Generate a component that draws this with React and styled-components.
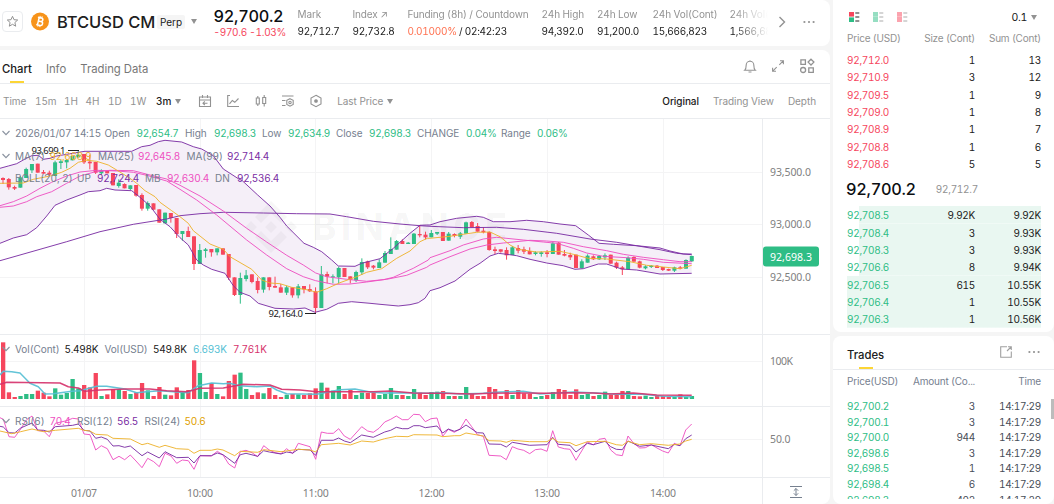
import React from 'react'
import styled, { createGlobalStyle } from 'styled-components'

const GlobalStyle = createGlobalStyle`
  * {
    box-sizing: border-box;
  }
  body {
    margin: 0;
    background: #f5f5f5;
    color: #202020;
    font-family: Inter, 'Noto Sans', sans-serif;
    font-size: 10px;
    font-variant-numeric: tabular-nums;
    letter-spacing: -0.28px;
    overflow: hidden;
  }
  svg {
    display: block;
    flex: none;
  }
`

const green = '#2ebd85'
const red = '#f6465d'
const purple = '#7a2da3'
const pink = '#ee4fc1'
const yellow = '#eeb22b'
const gray = '#929292'

const Page = styled.div`
  display: grid;
  grid-template-columns: 830px 221px;
  column-gap: 3px;
  width: 1054px;
  height: 504px;
  overflow: hidden;
`

const Column = styled.div`
  display: flex;
  flex-direction: column;
  gap: 4px;
  min-width: 0;
  height: 504px;
`

const Header = styled.header`
  display: flex;
  align-items: center;
  height: 46px;
  padding: 0 0 3px 2px;
  background: #fff;
  border-radius: 0 8px 8px 0;
`

const StarButton = styled.div`
  display: flex;
  align-items: center;
  justify-content: center;
  width: 21px;
  height: 21px;
  margin-right: 8px;
  border: 1px solid #eaecef;
  border-radius: 4px;
`

const Title = styled.h1`
  width: 100px;
  margin: 0 0 0 8px;
  font-size: 16.5px;
  font-weight: 500;
  letter-spacing: -0.05px;
  white-space: nowrap;
`

const Badge = styled.span`
  width: 28px;
  height: 14px;
  margin-top: 1px;
  line-height: 14px;
  border-radius: 2px;
  background: #f5f5f5;
  letter-spacing: 0;
  text-align: center;
`

const Caret = styled.i`
  display: inline-block;
  flex: none;
  width: 0;
  height: 0;
  margin-left: ${p => p.$ml || 0}px;
  border: 3.5px solid transparent;
  border-top: 5px solid #929292;
  border-bottom: 0;
`

const LastPrice = styled.div`
  width: 84px;
  margin: 3px 0 0 17px;
  font-size: 10px;
  line-height: 13px;
  white-space: nowrap;
  color: ${red};
`

const BigPrice = styled.div`
  font-size: 16.3px;
  font-weight: 500;
  line-height: 19px;
  color: #0b0e11;
`

const Stats = styled.div`
  display: flex;
  width: 470px;
  padding-top: 3px;
  overflow: hidden;
  mask-image: linear-gradient(90deg, #000 435px, transparent 470px);
`

const Stat = styled.div`
  flex: none;
  width: ${p => p.$w}px;
  line-height: 17px;
  white-space: nowrap;
`

const StatLabel = styled.div`
  color: ${gray};
  letter-spacing: -0.13px;
`

const Funding = styled.span`
  color: #ff7150;
`

const ChartCard = styled.section`
  display: flex;
  flex-direction: column;
  height: 454px;
  background: #fff;
  border-radius: 0 8px 8px 0;
`

const TabBar = styled.div`
  display: flex;
  align-items: center;
  gap: 14px;
  height: 34px;
  padding: 4px 15px 0 2px;
  border-bottom: 1px solid #eaecef;
`

const Tab = styled.div`
  display: flex;
  flex-direction: column;
  align-items: center;
  height: 29px;
  padding-top: 6px;
  line-height: 18px;
  font-size: 11.3px;
  font-weight: ${p => (p.$active ? 500 : 400)};
  letter-spacing: 0;
  color: ${p => (p.$active ? '#202020' : '#777')};
  &:after {
    content: '';
    width: 14px;
    height: 2px;
    margin-top: 3px;
    background: ${p => (p.$active ? '#fcd535' : 'transparent')};
  }
`

const TabIcons = styled.div`
  display: flex;
  align-items: center;
  gap: 14px;
  margin: -5px 0 0 auto;
`

const Toolbar = styled.div`
  display: flex;
  align-items: center;
  height: 35px;
  padding: 0 14px 0 3px;
  border-bottom: 1px solid #eaecef;
  letter-spacing: -0.06px;
  color: ${gray};
`

const Interval = styled.span`
  width: ${p => p.$w}px;
  color: ${p => (p.$active ? '#202020' : gray)};
  font-weight: ${p => (p.$active ? 500 : 400)};
  white-space: nowrap;
`

const ToolIcons = styled.div`
  display: flex;
  align-items: center;
  gap: 13.8px;
  margin: 0 14px 0 17px;
`

const ViewLinks = styled.div`
  display: flex;
  gap: 14px;
  margin-left: auto;
`

const ChartBody = styled.div`
  position: relative;
  height: 385px;
`

const Legend = styled.div`
  position: absolute;
  left: 2px;
  top: ${p => p.$top}px;
  display: flex;
  align-items: center;
  height: 14px;
  white-space: nowrap;
`

const LegendItem = styled.span`
  width: ${p => p.$w}px;
  color: ${p => p.$color || '#76808f'};
`

const LegendName = styled(LegendItem)`
  letter-spacing: -0.06px;
`

const BookCard = styled.section`
  height: 332px;
  padding: 10px 13px 0 14px;
  background: #fff;
  border-radius: 0 0 8px 8px;
`

const BookTools = styled.div`
  display: flex;
  align-items: center;
  gap: 13px;
  height: 14px;
  padding-left: 2px;
`

const Precision = styled.div`
  display: flex;
  align-items: center;
  margin: 0 4px 0 auto;
  font-size: 10.5px;
`

const Row = styled.div`
  display: grid;
  grid-template-columns: 66px 62px 66px;
  height: ${p => p.$h || 17.33}px;
  line-height: ${p => (p.$h || 17.33) + (p.$shift || 0)}px;
  background: ${p => (p.$depth ? `linear-gradient(#e9f7f1, #e9f7f1) right / ${p.$depth}% 100% no-repeat` : 'none')};
  color: ${p => p.$color || '#202020'};
  letter-spacing: ${p => p.$ls || -0.28}px;
  white-space: nowrap;
  span {
    text-align: right;
  }
  span:first-child {
    text-align: left;
    color: ${p => p.$price};
  }
`

const MidPrice = styled.div`
  display: flex;
  align-items: center;
  gap: 20px;
  height: 34px;
  margin-left: -1px;
  color: ${gray};
`

const TradesCard = styled.section`
  display: flex;
  flex-direction: column;
  height: 168px;
  background: #fff;
  border-radius: 8px;
  overflow: hidden;
`

const TradesHead = styled.div`
  display: flex;
  align-items: center;
  gap: 15px;
  height: 34px;
  padding: 0 14px 2px;
  border-bottom: 1px solid #eaecef;
`

const TradesTab = styled(Tab)`
  height: 34px;
  padding-top: 11px;
  margin-right: auto;
`

const TradesList = styled.div`
  position: relative;
  height: 129px;
  padding: 3px 13px 0 14px;
  overflow: hidden;
`

const ScrollThumb = styled.i`
  position: absolute;
  right: 0;
  top: 29px;
  width: 3px;
  height: 20px;
  background: #bcbcbc;
`

const Spacer = styled.div`
  height: 10px;
`

const asks = [
  ['92,712.0', '1', '13'],
  ['92,710.9', '3', '12'],
  ['92,709.5', '1', '9'],
  ['92,709.0', '1', '8'],
  ['92,708.9', '1', '7'],
  ['92,708.8', '1', '6'],
  ['92,708.6', '5', '5'],
]

const bids = [
  ['92,708.5', '9.92K', '9.92K', 94],
  ['92,708.4', '3', '9.93K', 94],
  ['92,708.3', '3', '9.93K', 94],
  ['92,706.6', '8', '9.94K', 94],
  ['92,706.5', '615', '10.55K', 100],
  ['92,706.4', '1', '10.55K', 100],
  ['92,706.3', '1', '10.56K', 100],
]

const trades = [
  ['92,700.2', '3'],
  ['92,700.1', '3'],
  ['92,700.0', '944'],
  ['92,698.6', '3'],
  ['92,698.5', '1'],
  ['92,698.4', '6'],
  ['92,698.3', '402'],
]

// candles: colour, body top, body bottom, wick top, wick bottom
// each block is stored in thirds of a pixel from its own vertical origin
const candleBlocks = [
  [120, 'r174,180,172,192 r177,202,174,209 r201,206,197,210 g172,203,168,203 g147,174,143,174 g132,151,132,159 r131,158,131,158 r156,161,150,161 r158,164,152,168 g127,168,122,168 g124,129,118,147 g120,127,118,145 g108,121,108,121 g104,112,93,114 r102,127,102,132 r125,130,104,148 r126,158,126,162 g151,160,148,165 r153,160,153,160 r159,196,159,196 g188,198,178,203 r192,205,190,205 g196,207,196,210 r195,227,195,230 r225,266,220,272 g249,266,244,272 r250,269,250,269 r268,308,268,308 g278,310,278,310 r279,294,279,308 r294,342,294,354 g333,342,333,362 r333,351,320,351 r349,432,349,450 g390,432,372,432 g388,393,384,413 r387,397,387,410 g385,397,385,406 r385,404,385,404'],
  [180, 'r222,293,222,300 r292,345,292,348 g294,345,278,371 g286,297,270,304 r283,306,283,310 r303,330,292,340 g292,329,292,338 r292,321,292,331 r318,323,290,323 r322,338,312,338 g322,338,317,345 r322,346,322,353 g319,346,312,355 r318,328,318,340 r327,334,313,336 r334,384,322,400 g283,384,258,384 r282,290,275,310 g289,292,283,310 g264,292,260,310 r264,291,264,291 r289,299,289,310 g276,301,272,306 g246,277,235,285 r244,262,242,267 r257,263,255,268 g247,264,238,264 g219,248,213,248 g207,222,172,222 g183,209,180,209 r183,192,178,192 g188,192,186,192 g161,192,159,192 r162,166,136,172 r164,172,155,178'],
  [190, 'g129,142,120,142 g126,131,126,135 r126,153,126,153 g131,152,126,152 r132,138,130,142 g130,140,126,147 g97,131,95,131 r96,112,93,112 r108,125,99,125 r122,127,112,130 r126,180,124,182 r178,183,170,192 r178,185,178,188 r180,196,172,209 g172,195,168,195 r174,182,165,190 r178,185,170,192 r183,193,172,193 g187,192,184,196 g187,192,184,200 r187,192,180,202 g160,192,155,192 r158,194,156,194 r192,197,180,199 r195,202,188,210 r194,234,194,234 g214,235,208,235 g197,218,193,218 r199,208,196,210 g198,208,195,210 g196,202,190,210 r194,221,194,221 r218,233,215,237 r232,238,228,255 g203,238,199,238 r201,215,199,215 r214,233,212,235 g229,235,226,238 g227,231,225,234 r227,234,225,234 r231,240,231,243 r237,242,236,243 g232,242,230,246 r232,236,228,238 g210,236,208,236 g198,214,197,216'],
]

const step = 5.788
const candles = candleBlocks
  .flatMap(([oy, text]) =>
    text.split(' ').map(c => {
      const [top, bottom, high, low] = c.slice(1).split(',').map(v => oy + v / 3)
      return { up: c[0] === 'g', top, bottom, high, low }
    })
  )
  .map((c, i) => ({ ...c, x: 3 + i * step }))

const volumes = [
  170, 20, 6, 9, 15, 15, 25, 19, 8, 32, 13, 18, 60, 32, 42, 35, 78, 9, 14, 30, 29, 24, 15, 20, 48, 26, 9, 36, 13, 11,
  35, 21, 27, 116, 78, 21, 48, 15, 8, 54, 73, 79, 30, 12, 20, 17, 33, 12, 6, 13, 15, 14, 12, 17, 32, 49, 34, 25, 39, 15,
  27, 12, 19, 18, 18, 12, 15, 33, 12, 12, 9, 30, 19, 12, 21, 22, 24, 9, 9, 9, 36, 18, 9, 9, 36, 30, 9, 27, 12, 27,
  17, 16, 6, 9, 12, 21, 30, 27, 12, 29, 12, 15, 9, 12, 22, 12, 12, 24, 24, 9, 8, 10, 6, 9, 9, 7, 6, 14, 6, 9,
]

const joinBlocks = (...blocks) =>
  blocks
    .flatMap(([ox, oy, text]) =>
      text.split(' ').map(p => {
        const [x, y] = p.split(',')
        return `${(ox + x / 3).toFixed(1)},${(oy + y / 3).toFixed(1)}`
      })
    )
    .join(' ')

const bollUp = joinBlocks(
  [0, 120, '0,145 25,138 50,131 75,117 95,107 115,106 130,118 150,115 170,108 200,103 235,97 255,94 395,94 425,80 450,76 475,65 495,61 545,66 580,80 605,87 640,107 670,147 690,160 715,176'],
  [180, 180, '187,2 233,45 270,78 300,112 320,138 372,190 400,202 425,215 455,240 475,258 525,259 545,250 600,236 640,205 690,160 720,136 740,135'],
  [430, 190, '0,105 30,95 80,85 140,79 160,82 190,95 240,95 290,91 340,95 390,102 437,107 475,135 507,160 550,163 620,167 690,174 720,183 760,192 785,192']
)
const bollDown = joinBlocks(
  [0, 120, '0,370 40,354 80,344 110,323 140,288 165,256 200,240 240,225 265,215 300,212 320,205 345,210 395,212 420,232 450,258 480,298 510,320'],
  [180, 180, '0,173 25,195 50,240 70,255 95,268 135,280 160,317 180,337 210,348 235,370 285,385 340,387 375,384 405,397 440,388 475,370 515,365 570,370 600,373 655,378 690,374 715,368 735,355'],
  [430, 190, '0,302 30,293 75,273 120,238 150,220 180,198 205,190 230,193 260,197 300,208 350,219 400,227 435,238 460,236 505,222 530,222 575,237 620,240 690,252 785,250']
)
const ma25 = joinBlocks(
  [0, 120, '0,257 40,245 80,228 120,205 155,187 200,168 240,156 290,151 350,153 400,157 440,166 500,183'],
  [180, 180, '0,28 50,60 110,105 200,180 260,225 320,266 370,290 407,302 460,313 510,312 560,306 610,299 640,292 700,265 745,240'],
  [430, 190, '0,203 60,182 100,165 160,147 200,142 280,150 340,156 380,160 430,175 470,189 520,199 590,203 640,208 700,217 785,221']
)
const bollMid = joinBlocks(
  [0, 120, '0,262 40,258 80,245 110,230 155,215 200,190 240,168 280,157 330,151 400,152 450,165 500,177'],
  [180, 180, '0,16 60,48 130,93 200,145 260,186 320,226 370,255 407,279 440,290 500,298 560,304 620,298 680,286 740,262'],
  [430, 190, '0,225 60,200 120,177 170,165 220,159 300,151 350,153 400,157 460,170 530,182 580,193 640,202 700,209 750,215 785,215']
)
const ma7 = joinBlocks(
  [0, 120, '0,190 70,189 100,178 150,168 185,157 210,145 235,127 260,121 290,124 325,135 350,150 390,175 410,190 435,212 465,230 480,247 515,272'],
  [180, 180, '0,110 25,130 40,152 90,192 130,208 150,230 215,268 245,300 270,309 300,311 335,322 385,330 410,337 440,326 480,308 530,290 560,277 605,266 650,235 690,213 720,185 742,175'],
  [430, 190, '0,145 60,139 100,133 140,127 180,126 210,140 240,165 265,178 320,186 390,184 430,193 475,205 530,207 600,215 650,226 700,231 750,236 785,226']
)
const ma99 = joinBlocks(
  [0, 120, '0,422 60,405 120,388 200,365 300,335 400,313 500,297'],
  [180, 180, '0,107 60,101 130,97 250,99 350,101 450,102 500,110 580,124 660,132 720,137'],
  [430, 190, '0,109 100,113 200,112 280,118 380,130 480,147 560,157 630,169 690,179 740,190 785,194']
)
const volMa5 = joinBlocks(
  [0, 330, '0,135 10,124 35,125 60,129 90,160 115,170 135,192 160,191 215,184 240,182 290,169 320,169 375,177 410,188 440,185 480,182 530,186 565,188 595,167 635,159 670,161 690,160 715,167 770,170 810,168 830,180 860,191 950,193 1000,183'],
  [340, 330, '0,179 45,177 90,186 130,189 200,188 260,190 310,188 360,192 430,190 480,186 550,184 600,192 700,186 770,189 830,193 900,192 970,199 1055,200']
)
const volMa10 = joinBlocks(
  [0, 330, '0,163 20,157 180,159 205,170 235,174 255,184 300,180 380,177 450,177 500,182 560,185 600,175 670,174 730,163 810,165 845,178 900,180 950,185'],
  [340, 330, '0,185 100,185 150,183 220,189 270,190 300,190 400,192 450,190 550,189 620,190 680,188 760,189 810,192 880,189 950,195 1055,196']
)
const rsi6 = joinBlocks(
  [0, 330, '0,263 10,268 27,320 44,322 62,297 79,270 96,258 113,302 131,303 148,320 166,280 200,272 218,265 235,267 252,312 270,314 287,360 304,347 322,356 339,389 357,379 374,389 391,375 408,393 426,413 443,385 461,395 478,410 495,370 513,378 530,400 547,390 565,392 582,418 600,377 634,378 652,364 669,375 686,402 704,414 721,365 738,361 756,368 773,380 791,347 808,360 825,368 843,371 860,356 878,371 895,340 930,350 947,388 964,306 982,310 1000,310 1016,296'],
  [340, 330, '13,318 31,328 65,290 83,303 100,307 117,295 134,276 152,268 169,258 187,269 204,269 221,253 239,254 256,275 273,266 291,264 308,319 325,298 343,307 360,297 378,267 395,290 412,314 430,319 447,376 482,378 499,389 517,350 534,357 551,361 569,371 586,359 603,357 621,364 638,302 655,351 673,356 690,358 708,391 742,335 760,345 777,328 795,325 812,360 829,374 847,377 864,318 881,340 899,354 916,353 934,344 951,354 968,363 985,369 1003,340 1020,347 1037,300 1055,282']
)
const rsi12 = joinBlocks(
  [0, 330, '0,289 10,291 27,308 44,309 62,294 96,279 113,300 131,301 148,306 166,290 218,286 235,282 252,301 270,303 287,325 304,321 322,328 339,348 357,347 374,352 391,348 426,377 443,366 478,384 495,365 530,383 565,382 582,399 600,377 634,377 652,369 669,374 704,400 721,374 738,370 773,379 791,362 808,366 843,372 860,366 878,369 895,358 930,360 947,376 964,331 1000,331 1016,324'],
  [340, 330, '13,333 31,338 65,315 100,322 134,306 152,301 169,292 187,296 204,296 221,287 239,287 256,293 291,288 308,309 325,297 343,304 360,298 378,285 412,308 430,309 447,342 482,343 499,351 517,337 569,346 621,344 638,322 655,343 690,346 708,366 742,340 760,344 795,334 812,350 829,358 847,359 864,333 899,349 934,345 985,356 1003,343 1020,347 1037,326 1055,315']
)
const rsi24 = joinBlocks(
  [0, 330, '0,303 35,311 62,305 96,297 131,305 166,301 235,295 252,301 270,303 287,313 322,315 339,325 391,327 426,344 443,340 478,352 495,346 530,356 565,358 582,370 600,361 634,361 652,357 669,360 704,377 721,364 773,367 791,359 843,365 895,358 930,360 947,366 964,344 1016,340'],
  [340, 330, '31,345 65,333 100,336 134,326 169,319 204,320 221,314 291,315 308,320 343,317 360,317 378,309 430,318 447,332 482,333 499,337 517,331 569,335 621,335 638,325 655,336 690,338 708,347 742,335 795,334 829,344 847,346 864,334 881,339 899,344 934,341 985,346 1020,342 1037,333 1055,328']
)

const hours = [
  ['01/07', 84],
  ['10:00', 200],
  ['11:00', 315.7],
  ['12:00', 431.5],
  ['13:00', 547],
  ['14:00', 663],
]

const Line = ({ points, color, width = 1 }) => (
  <polyline
    points={points}
    fill="none"
    stroke={color}
    strokeOpacity=".92"
    strokeWidth={width}
    strokeLinejoin="round"
  />
)

const AxisLabel = ({ x, y, w, children, fill = '#808080', anchor, size = 10.5 }) => (
  <text
    x={x}
    y={y}
    fill={fill}
    fontFamily="'Noto Sans', sans-serif"
    fontSize={size}
    letterSpacing="0"
    textAnchor={anchor}
    textLength={w}
  >
    {children}
  </text>
)

const Plot = () => (
  <svg width="830" height="385" viewBox="0 119 830 385">
    <g stroke="#f4f4f5" strokeWidth="1">
      {hours.map(([label, x]) => (
        <path key={label} d={`M${Math.floor(x) + 0.5} 119V477`} />
      ))}
      {[172.5, 224.5, 277.5, 361.5, 439.5].map(y => (
        <path key={y} d={`M0 ${y}H762`} />
      ))}
    </g>
    <g stroke="#eaecef" strokeWidth="1">
      <path d="M0 334.5H830M0 406.5H830M0 477.5H830M762.5 119V504" />
    </g>

    <polygon points={`${bollUp} ${bollDown.split(' ').reverse().join(' ')}`} fill="#f5eff8" />
    <g fill="#000" fillOpacity=".03">
      <path d="M271 201l16 16-6 6-10-10-10 10-6-6zM251 221l6 6-6 6-6-6zM291 221l6 6-6 6-6-6zM271 221l6 6-6 6-6-6zM255 237l6-6 10 10 10-10 6 6-16 16z" />
      <text x="312" y="240" fontFamily="Inter, sans-serif" fontWeight="800" fontSize="37" textLength="195">
        BINANCE
      </text>
    </g>

    {candles.map(c => (
      <g key={c.x} fill={c.up ? green : red}>
        <rect x={c.x - 0.5} y={c.high} width="1" height={c.low - c.high} />
        <rect x={c.x - 2} y={c.top} width="4" height={c.bottom - c.top} />
      </g>
    ))}
    <Line points={bollUp} color={purple} />
    <Line points={bollDown} color={purple} />
    <Line points={ma99} color={purple} />
    <Line points={bollMid} color={pink} />
    <Line points={ma25} color={pink} />
    <Line points={ma7} color={yellow} />

    {candles.map((c, i) => (
      <rect
        key={c.x}
        x={c.x - 2}
        y={399 - volumes[i] / 3}
        width="4.3"
        height={volumes[i] / 3}
        fill={c.up ? green : red}
      />
    ))}
    <Line points={volMa5} color="#56bfd4" width={1.5} />
    <Line points={volMa10} color="#d6336c" width={1.5} />

    <Line points={rsi6} color={pink} />
    <Line points={rsi12} color={purple} />
    <Line points={rsi24} color={yellow} />

    <path d="M68 150.5H79M305 313.5H316" stroke="#202020" />
    <AxisLabel x={31.5} y={154} w={34} fill="#202020" size={9.5}>93,699.1</AxisLabel>
    <AxisLabel x={268.5} y={317.3} w={34.5} fill="#202020" size={9.5}>92,164.0</AxisLabel>

    <AxisLabel x={770} y={175.5} w={41}>93,500.0</AxisLabel>
    <AxisLabel x={770} y={227.5} w={41}>93,000.0</AxisLabel>
    <AxisLabel x={770} y={280.5} w={41}>92,500.0</AxisLabel>
    <AxisLabel x={770} y={364.5} w={23}>100K</AxisLabel>
    <AxisLabel x={770} y={442.5} w={20.5}>50.0</AxisLabel>
    {hours.map(([label, x]) => (
      <AxisLabel key={label} x={x} y={496.5} w={26} anchor="middle">{label}</AxisLabel>
    ))}
    <rect x="763" y="246.5" width="56" height="20" rx="3" fill={green} />
    <AxisLabel x={770} y={261} w={42} fill="#fff">92,698.3</AxisLabel>
    <path
      d="M790 486.5H802M790 497.5H802M796 488.5V495.5M793.8 490.7L796 488.5L798.2 490.7M793.8 493.3L796 495.5L798.2 493.3"
      fill="none"
      stroke="#76808f"
    />
  </svg>
)

const Icon = ({ w = 14, h = 14, color = '#929292', sw = 1.1, children, d }) => (
  <svg width={w} height={h} viewBox={`0 0 ${w} ${h}`} fill="none" stroke={color} strokeWidth={sw}>
    {d && <path d={d} />}
    {children}
  </svg>
)

const LegendChevron = () => (
  <LegendItem $w={13}>
    <Icon w={8} h={6} d="M.5 1L4 4.7L7.5 1" color="#8a929f" />
  </LegendItem>
)

const Dots = () => (
  <svg width="12" height="4" viewBox="0 0 12 4" fill="#929292">
    <circle cx="1.4" cy="2" r="1.1" />
    <circle cx="6" cy="2" r="1.1" />
    <circle cx="10.6" cy="2" r="1.1" />
  </svg>
)

const BookIcon = ({ top, bottom }) => (
  <svg width="11" height="10" viewBox="0 0 11 10">
    <path d="M0 0H5V4.6H0z" fill={top} />
    <path d={top === bottom ? 'M0 4.6H5V10H0z' : 'M0 5.4H5V10H0z'} fill={bottom} />
    <path d="M6.3 0H10.3V2H6.3zM6.3 4H10.3V6H6.3zM6.3 8H10.3V10H6.3z" fill={top === bottom ? '#d5d5d5' : '#929292'} />
  </svg>
)

const PairHeader = () => (
  <Header>
    <StarButton>
      <Icon w={13} h={13} d="M6.5 1.3L8 4.7L11.7 5L8.9 7.5L9.7 11.2L6.5 9.3L3.3 11.2L4.1 7.5L1.3 5L5 4.7Z" sw={1} />
    </StarButton>
    <svg width="18" height="19" viewBox="0 0 18 19">
      <circle cx="9" cy="9.5" r="9" fill="#f7931a" />
      <g transform="rotate(13 9 9.5)" fill="none" stroke="#fff" strokeWidth="1.5">
        <path d="M6 5.7H9.6A1.8 1.8 0 0 1 9.6 9.3H7.3M9.6 9.3H10A2 2 0 0 1 10 13.3H6M7.3 5.7V13.3" />
        <path d="M8 4V5.7M10 4V5.7M8 13.3V15M10 13.3V15" strokeWidth="1" />
      </g>
    </svg>
    <Title>BTCUSD CM</Title>
    <Badge>Perp</Badge>
    <Caret $ml={5.5} />
    <LastPrice>
      <BigPrice>92,700.2</BigPrice>
      -970.6 -1.03%
    </LastPrice>
    <Stats>
      <Stat $w={55}>
        <StatLabel>Mark</StatLabel>
        92,712.7
      </Stat>
      <Stat $w={55}>
        <StatLabel>Index ↗</StatLabel>
        92,732.8
      </Stat>
      <Stat $w={134}>
        <StatLabel>Funding (8h) / Countdown</StatLabel>
        <Funding>0.01000%</Funding> / 02:42:23
      </Stat>
      <Stat $w={55.5}>
        <StatLabel>24h High</StatLabel>
        94,392.0
      </Stat>
      <Stat $w={55.5}>
        <StatLabel>24h Low</StatLabel>
        91,200.0
      </Stat>
      <Stat $w={77}>
        <StatLabel>24h Vol(Cont)</StatLabel>
        15,666,823
      </Stat>
      <Stat $w={70}>
        <StatLabel>24h Vol(USD)</StatLabel>
        1,566,682,300
      </Stat>
    </Stats>
    <Icon w={28} h={14} d="M11.5 2L16.5 7L11.5 12" sw={1.4} />
    <Icon w={7} h={4} />
    <Dots />
  </Header>
)

const ChartTools = () => (
  <Toolbar>
    <Interval $w={32}>Time</Interval>
    <Interval $w={29}>15m</Interval>
    <Interval $w={21.5}>1H</Interval>
    <Interval $w={22.5}>4H</Interval>
    <Interval $w={22}>1D</Interval>
    <Interval $w={26}>1W</Interval>
    <Interval $w={18} $active>3m</Interval>
    <Caret $ml={1} />
    <ToolIcons>
      <Icon d="M1.5 3H12.5V12.5H1.5zM1.5 6H12.5M4.5 1V4M9.5 1V4M9.5 9.2H5M6.8 7.4L5 9.2L6.8 11" />
      <Icon d="M1.7 1V12.5H13M3.5 9.8L6.3 6.5L8.8 8.3L12.5 4.5M1.7 1.5H4" />
      <Icon d="M2.3 4H5.3V10H2.3zM3.8 2V4M3.8 10V12M8.7 3.5H11.7V9.5H8.7zM10.2 1V3.5M10.2 9.5V12.5" />
      <Icon d="M1 2H12.5M1 6.5H4.5M1 11.5H4.5">
        <path d="M9 4.7L12.2 6.3V10.4L9 12.2L5.8 10.4V6.3Z" />
        <circle cx="9" cy="8.4" r="1.2" />
      </Icon>
      <Icon d="M7 1.3L12 4.1V9.9L7 12.7L2 9.9V4.1Z">
        <circle cx="7" cy="7" r="1.3" fill="#929292" />
      </Icon>
    </ToolIcons>
    <Interval $w={45}>Last Price</Interval>
    <Caret $ml={4.5} />
    <ViewLinks>
      <Interval $active>Original</Interval>
      <Interval>Trading View</Interval>
      <Interval>Depth</Interval>
    </ViewLinks>
  </Toolbar>
)

const Chart = () => (
  <ChartCard>
    <TabBar>
      <Tab $active>Chart</Tab>
      <Tab>Info</Tab>
      <Tab>Trading Data</Tab>
      <TabIcons>
        <Icon d="M7 1.2V2.2M1.6 11.3C3.1 10 3.2 8 3.2 6A3.8 3.8 0 0 1 10.8 6C10.8 8 10.9 10 12.4 11.3ZM5.5 13H8.5" />
        <Icon d="M9 1.8H12.4V5.2M12 2.2L8.3 5.9M5 12.2H1.6V8.8M2 11.8L5.7 8.1" />
        <Icon w={16} h={16} d="M1.9 1.9H6.4V6.4H1.9zM9.8 9.8H14.3V14.3H9.8zM12 1.2L14.9 4.1L12 7L9.1 4.1Z" sw={1.3}>
          <circle cx="4.1" cy="12" r="2.5" />
        </Icon>
      </TabIcons>
    </TabBar>
    <ChartTools />
    <ChartBody>
      <Plot />
      <Legend $top={7}>
        <LegendChevron />
        <LegendItem $w={89.5}>2026/01/07 14:15</LegendItem>
        <LegendName $w={32}>Open</LegendName>
        <LegendItem $w={48.5} $color={green}>92,654.7</LegendItem>
        <LegendName $w={29}>High</LegendName>
        <LegendItem $w={48} $color={green}>92,698.3</LegendItem>
        <LegendName $w={26}>Low</LegendName>
        <LegendItem $w={48} $color={green}>92,634.9</LegendItem>
        <LegendName $w={33}>Close</LegendName>
        <LegendItem $w={48} $color={green}>92,698.3</LegendItem>
        <LegendName $w={49}>CHANGE</LegendName>
        <LegendItem $w={35} $color={green}>0.04%</LegendItem>
        <LegendName $w={36}>Range</LegendName>
        <LegendItem $color={green}>0.06%</LegendItem>
      </Legend>
      <Legend $top={30}>
        <LegendChevron />
        <LegendName $w={34.5}>MA(7)</LegendName>
        <LegendItem $w={48.5} $color={yellow}>92,668.9</LegendItem>
        <LegendName $w={40}>MA(25)</LegendName>
        <LegendItem $w={48.5} $color={pink}>92,645.8</LegendItem>
        <LegendName $w={40.5}>MA(99)</LegendName>
        <LegendItem $color={purple}>92,714.4</LegendItem>
      </Legend>
      <Legend $top={52}>
        <LegendItem $w={13} />
        <LegendName $w={62}>BOLL(20, 2)</LegendName>
        <LegendName $w={20}>UP</LegendName>
        <LegendItem $w={48} $color={purple}>92,724.4</LegendItem>
        <LegendName $w={22}>MB</LegendName>
        <LegendItem $w={48} $color={pink}>92,630.4</LegendItem>
        <LegendName $w={22}>DN</LegendName>
        <LegendItem $color={purple}>92,536.4</LegendItem>
      </Legend>
      <Legend $top={223}>
        <LegendChevron />
        <LegendName $w={49.5}>Vol(Cont)</LegendName>
        <LegendItem $w={40} $color="#202020">5.498K</LegendItem>
        <LegendName $w={48.5}>Vol(USD)</LegendName>
        <LegendItem $w={40} $color="#202020">549.8K</LegendItem>
        <LegendItem $w={40} $color="#56bfd4">6.693K</LegendItem>
        <LegendItem $color="#d6336c">7.761K</LegendItem>
      </Legend>
      <Legend $top={295}>
        <LegendChevron />
        <LegendName $w={34.5}>RSI(6)</LegendName>
        <LegendItem $w={27.5} $color={pink}>70.4</LegendItem>
        <LegendName $w={40}>RSI(12)</LegendName>
        <LegendItem $w={27.5} $color={purple}>56.5</LegendItem>
        <LegendName $w={40}>RSI(24)</LegendName>
        <LegendItem $color="#e0a000">50.6</LegendItem>
      </Legend>
    </ChartBody>
  </ChartCard>
)

const OrderBook = () => (
  <BookCard>
    <BookTools>
      <BookIcon top={red} bottom={green} />
      <BookIcon top="#96dec2" bottom="#96dec2" />
      <BookIcon top="#fba3ae" bottom="#fba3ae" />
      <Precision>
        0.1 <Caret $ml={4} />
      </Precision>
    </BookTools>
    <Row $h={27} $shift={2} $ls={-0.2} $color={gray} $price={gray}>
      <span>Price (USD)</span>
      <span>Size (Cont)</span>
      <span>Sum (Cont)</span>
    </Row>
    {asks.map(([price, size, sum]) => (
      <Row key={price} $shift={1} $price={red}>
        <span>{price}</span>
        <span>{size}</span>
        <span>{sum}</span>
      </Row>
    ))}
    <MidPrice>
      <BigPrice>92,700.2</BigPrice>
      92,712.7
    </MidPrice>
    {bids.map(([price, size, sum, depth]) => (
      <Row key={price} $shift={2} $price={green} $depth={depth}>
        <span>{price}</span>
        <span>{size}</span>
        <span>{sum}</span>
      </Row>
    ))}
  </BookCard>
)

const Trades = () => (
  <TradesCard>
    <TradesHead>
      <TradesTab $active>Trades</TradesTab>
      <Icon d="M8 1.7H1.7V12.3H12.3V6.5M9 1.7H12.3V5M12 2L8 6" color="#a0a0a0" />
      <Dots />
    </TradesHead>
    <TradesList>
      <Row $h={16} $ls={-0.2} $color="#76808f" $price="#76808f">
        <span>Price(USD)</span>
        <span>Amount (Co...</span>
        <span>Time</span>
      </Row>
      <Spacer />
      {trades.map(([price, amount]) => (
        <Row key={price} $h={15.6} $color="#474d57" $price={green}>
          <span>{price}</span>
          <span>{amount}</span>
          <span>14:17:29</span>
        </Row>
      ))}
      <ScrollThumb />
    </TradesList>
  </TradesCard>
)

export default function App() {
  return (
    <Page>
      <GlobalStyle />
      <Column>
        <PairHeader />
        <Chart />
      </Column>
      <Column>
        <OrderBook />
        <Trades />
      </Column>
    </Page>
  )
}
